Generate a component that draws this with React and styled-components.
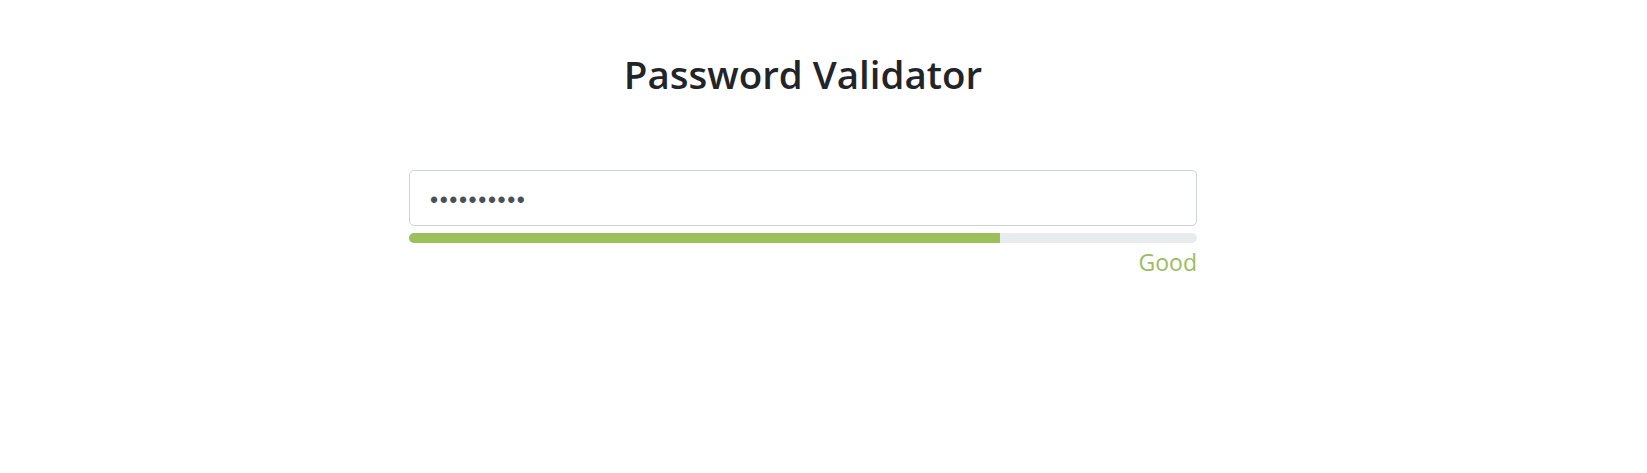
import React from 'react';
import styled, { createGlobalStyle } from 'styled-components';

const GlobalStyle = createGlobalStyle`
  body {
    margin: 0;
    background: #fff;
    font-family: "Open Sans", "Noto Sans", sans-serif;
    color: #212529;
  }
`;

const Page = styled.div`
  display: flex;
  flex-direction: column;
  align-items: center;
  padding-right: 41px;
  height: 473px;
`;

const Title = styled.h1`
  margin: 51px 0 0;
  font-size: 38.5px;
  font-weight: 600;
  line-height: 46px;
  color: #212529;
`;

const Form = styled.div`
  width: 788px;
  margin-top: 73px;
  display: flex;
  flex-direction: column;
`;

const Input = styled.input`
  box-sizing: border-box;
  width: 100%;
  height: 56px;
  padding: 4px 20px 0;
  border: 1px solid #ced4da;
  border-radius: 5px;
  font-family: "Liberation Sans", Arial, sans-serif;
  font-size: 23px;
  color: #495057;
  letter-spacing: 1.6px;
  outline: none;
`;

const Bar = styled.div`
  margin-top: 7px;
  height: 10px;
  border-radius: 5px;
  background: #e9ecef;
  overflow: hidden;
  display: flex;
`;

const Fill = styled.div`
  background: #9cc15a;
`;

const Label = styled.div`
  margin-top: 3px;
  text-align: right;
  font-size: 23px;
  line-height: 32px;
  color: #9bbd62;
`;

export default function App() {
  const strength = 75;
  return (
    <Page>
      <GlobalStyle />
      <Title>Password Validator</Title>
      <Form>
        <Input type="password" value="abcdefghij" readOnly />
        <Bar>
          <Fill style={{ width: `${strength}%` }} />
        </Bar>
        <Label>Good</Label>
      </Form>
    </Page>
  );
}
